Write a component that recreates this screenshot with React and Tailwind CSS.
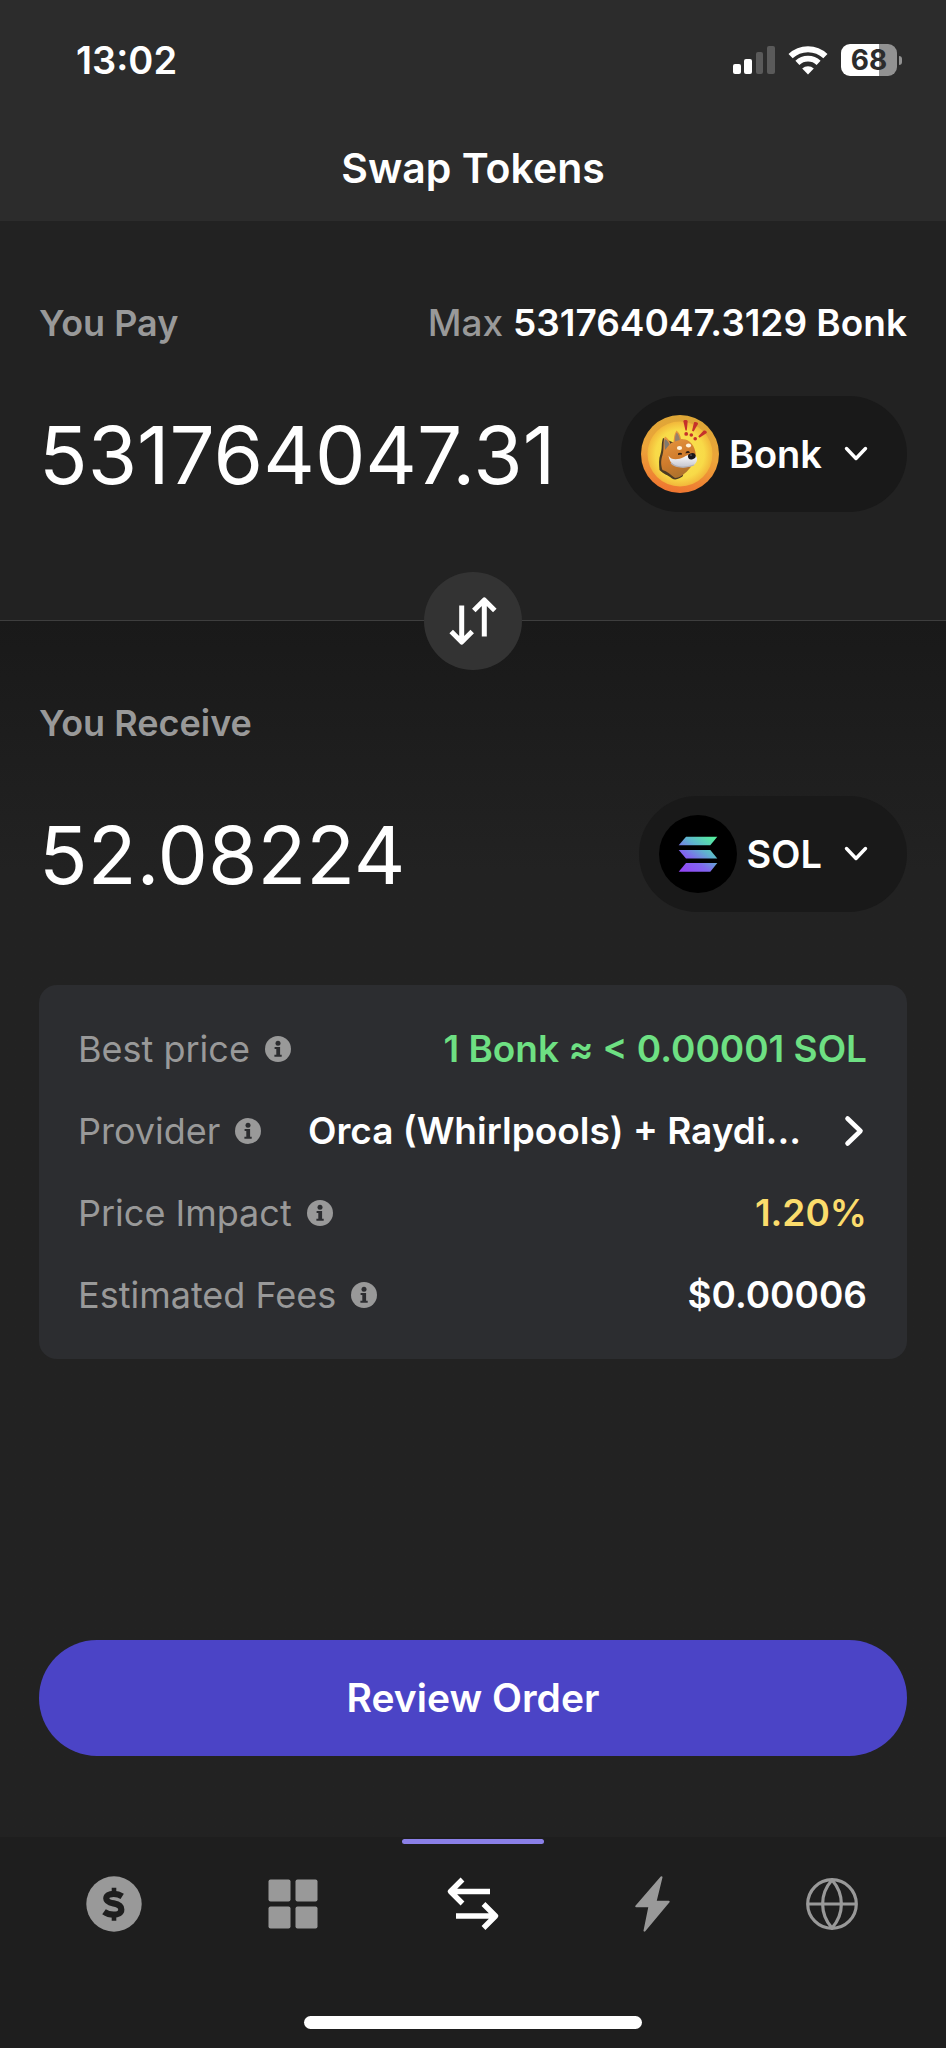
import React, { useState } from "react";

function SignalIcon() {
  return (
    <svg width="42" height="30" viewBox="0 0 42 30" aria-hidden="true">
      <rect x="0" y="19" width="8" height="10" rx="2" fill="#fff" />
      <rect x="11" y="14" width="8" height="15" rx="2" fill="#fff" />
      <rect x="23" y="7" width="7" height="22" rx="2" fill="#5a5a5a" />
      <rect x="34" y="1" width="8" height="28" rx="2" fill="#5a5a5a" />
    </svg>
  );
}

function WifiIcon() {
  return (
    <svg width="40" height="30" viewBox="0 0 40 30" fill="none" aria-hidden="true">
      <path d="M2.6 11.2A25.2 25.2 0 0 1 37.4 11.2" stroke="#fff" strokeWidth="6" />
      <path d="M9.4 17.8A15.4 15.4 0 0 1 30.6 17.8" stroke="#fff" strokeWidth="5.8" />
      <path d="M20 29.6L14.2 23.4A8.6 8.6 0 0 1 25.8 23.4Z" fill="#fff" />
    </svg>
  );
}

function Battery() {
  return (
    <div className="flex items-center gap-[2px]" aria-label="Battery 68%">
      <div className="flex h-8 w-14 items-center justify-center rounded-[9px] bg-linear-to-r from-white from-68% to-[#929292] to-68% text-[28px] leading-8 font-bold text-[#2c2c2c]">
        68
      </div>
      <div className="h-[9px] w-[3px] rounded-r-full bg-[#929292]" />
    </div>
  );
}

function BonkLogo() {
  return (
    <svg width="78" height="78" viewBox="0 0 78 78" className="shrink-0" aria-hidden="true">
      <defs>
        <linearGradient id="rim" x1="0.6" y1="0" x2="0.4" y2="1">
          <stop offset="0" stopColor="#dca636" />
          <stop offset="0.5" stopColor="#eda53a" />
          <stop offset="1" stopColor="#ef7430" />
        </linearGradient>
        <radialGradient id="disc">
          <stop offset="0" stopColor="#fbe552" />
          <stop offset="0.75" stopColor="#f8da48" />
          <stop offset="1" stopColor="#f2b73a" />
        </radialGradient>
        <linearGradient id="fur" x1="0.3" y1="0" x2="0.6" y2="1">
          <stop offset="0" stopColor="#ea9a42" />
          <stop offset="0.6" stopColor="#cf7b2c" />
          <stop offset="1" stopColor="#a8702c" />
        </linearGradient>
        <linearGradient id="muzzle" x1="0" y1="0" x2="0" y2="1">
          <stop offset="0" stopColor="#ffffff" />
          <stop offset="1" stopColor="#c4c4cc" />
        </linearGradient>
      </defs>
      <circle cx="39" cy="39" r="39" fill="url(#rim)" />
      <circle cx="39" cy="39" r="32.5" fill="url(#disc)" />
      <path d="M22 23C20 29 21.500 33 19.500 39C17.500 44 18 49 18.500 55C22 59 27 60 31 63.500C35 66 39 63 42 61L38 30Z" fill="#4b3a22" />
      <path d="M24 21.500C21.500 27 23.500 33 21.500 40C19.500 46 20 51 21.500 55C26 56 30 60 34 63C39 63 45 58 49 53L54.500 45C56 38 53 28 46 25C44 24 41 24 40 24C39.500 20 37.500 17 35.500 15.500C33 19 33 23 32.500 27C31 27.500 30 28 29.500 29C28 25 26.500 23 24 21.500Z" fill="url(#fur)" />
      <path d="M24 24C22.500 28 24 31 24 35L28.500 29.500C27.500 27 26 25 24 24Z" fill="#80796e" />
      <path d="M35.700 17.500C34 20 34 23 34 26.500L38.800 25C38.500 22 37.500 19.500 35.700 17.500Z" fill="#96816c" />
      <path d="M27.500 40.500C30 45.500 37 45 43 42C47 39.500 52 38 55.500 42C57.500 46 54 51.500 47 52C38 53.500 29 51.500 27.500 40.500Z" fill="url(#muzzle)" />
      <path d="M30 48C35 53 45 53 53 50" fill="none" stroke="#b4b1b6" strokeWidth="1.200" />
      <ellipse cx="38.500" cy="33" rx="2.600" ry="2" fill="#fff3dc" />
      <ellipse cx="47.500" cy="30.500" rx="2.600" ry="2" fill="#fff3dc" />
      <path d="M37 39.300C38 38 40 38 40.800 39Z" fill="#2a1a12" stroke="#2a1a12" />
      <path d="M44.800 37.800C45.800 36.300 47.800 36.300 48.500 37.300Z" fill="#2a1a12" stroke="#2a1a12" />
      <ellipse cx="50.800" cy="41.300" rx="3.900" ry="3.100" fill="#18161b" transform="rotate(-15 50.800 41.300)" />
      <ellipse cx="50" cy="40" rx="1.200" ry="0.600" fill="#77747c" />
      <g fill="#c5312b">
        <path d="M42.300 6C42.500 4.500 46.500 4.500 46.700 6L45.800 15.500H44.500Z" />
        <circle cx="45.200" cy="18.900" r="1.900" />
        <path d="M53 7.500C54 6.300 57.500 7.500 57 9L52.600 16.500L51 15.800Z" />
        <circle cx="50.300" cy="20" r="1.800" />
        <path d="M62.500 15.800C64 14.600 66.500 16.500 65.700 18L58.500 22.700L57.300 21.300Z" />
        <circle cx="54.200" cy="23.800" r="1.800" />
      </g>
    </svg>
  );
}

function SolanaLogo() {
  return (
    <svg width="78" height="78" viewBox="0 0 78 78" className="shrink-0" aria-hidden="true">
      <defs>
        <linearGradient id="sol" gradientUnits="userSpaceOnUse" x1="26" y1="58" x2="52" y2="22">
          <stop offset="0" stopColor="#9345f5" />
          <stop offset="0.35" stopColor="#8067ef" />
          <stop offset="0.65" stopColor="#5fb3cf" />
          <stop offset="1" stopColor="#55eba0" />
        </linearGradient>
      </defs>
      <circle cx="39" cy="39" r="39" fill="#000" />
      <g fill="url(#sol)">
        <path d="M27 21.700H58.300L51.300 30.300H19.700Z" />
        <path d="M19.700 35H51.300L58.300 43.600H27Z" />
        <path d="M27 48H58.300L51.300 56.700H19.700Z" />
      </g>
    </svg>
  );
}

function ChevronDown() {
  return (
    <svg width="24" height="16" viewBox="0 0 24 16" fill="none" className="shrink-0" aria-hidden="true">
      <path d="M2.500 2.500L12 12.500L21.500 2.500" stroke="#fff" strokeWidth="3.400" strokeLinecap="round" strokeLinejoin="round" />
    </svg>
  );
}

function InfoIcon() {
  return (
    <svg width="26" height="26" viewBox="0 0 26 26" aria-hidden="true">
      <circle cx="13" cy="13" r="13" fill="#999" />
      <circle cx="13" cy="7.300" r="2.500" fill="#2c2d30" />
      <path d="M9.600 11H15.100V18.800H16.700V20.800H9.400V18.800H11.300V12.900H9.600Z" fill="#2c2d30" />
    </svg>
  );
}

function TokenButton({ logo, symbol }) {
  return (
    <button
      type="button"
      className="flex h-[116px] shrink-0 items-center rounded-full bg-[#191919] pr-[39px] pl-5 text-[38px] leading-[48px] font-semibold text-white"
    >
      {logo}
      <span className="ml-[10px]">{symbol}</span>
      <span className="ml-[22px]">
        <ChevronDown />
      </span>
    </button>
  );
}

function AmountRow({ id, value, onChange, readOnly, logo, symbol }) {
  return (
    <div className="mt-[49px] flex items-center gap-4">
      <input
        id={id}
        value={value}
        onChange={onChange}
        readOnly={readOnly}
        inputMode="decimal"
        className="h-[116px] min-w-0 flex-1 bg-transparent text-[80px] text-white outline-none"
      />
      <TokenButton logo={logo} symbol={symbol} />
    </div>
  );
}

function DetailRow({ label, children }) {
  return (
    <div className="flex items-center justify-between">
      <dt className="flex items-center gap-[15px] text-[#999]">
        {label}
        <button type="button" aria-label={`About ${label}`}>
          <InfoIcon />
        </button>
      </dt>
      <dd className="text-[37px] font-semibold whitespace-nowrap text-white">{children}</dd>
    </div>
  );
}

const tabs = [
  {
    name: "Wallet",
    icon: (
      <svg width="56" height="56" viewBox="0 0 56 56" fill="none">
        <circle cx="28" cy="28" r="27.700" fill="#999" />
        <g stroke="#1e1e1e">
          <path d="M36.200 20.300C33.500 18.600 30.500 17.900 27.700 17.900C23 17.900 20.300 19.700 20.300 22.500C20.300 25.700 23.500 26.600 27.500 27.400C32 28.300 35.300 29.800 35.300 33.400C35.300 36.900 32 38.700 27.500 38.700C24 38.700 20.700 37.600 18 35.700" strokeWidth="6.200" />
          <path d="M28 11.700V17M28 39V44.700" strokeWidth="4.600" />
        </g>
      </svg>
    ),
  },
  {
    name: "Collectibles",
    icon: (
      <svg width="50" height="50" viewBox="0 0 50 50" fill="#999">
        <rect x="0.500" y="0.500" width="22" height="22" rx="2" />
        <rect x="27.500" y="0.500" width="22" height="22" rx="2" />
        <rect x="0.500" y="27.500" width="22" height="22" rx="2" />
        <rect x="27.500" y="27.500" width="22" height="22" rx="2" />
      </svg>
    ),
  },
  {
    name: "Swap",
    active: true,
    icon: (
      <svg width="54" height="54" viewBox="0 0 54 54" fill="none" stroke="#fff" strokeWidth="5.400">
        <path d="M44 14.500H5M16.500 2.500L4.500 14.500L16.500 26.500" strokeLinejoin="round" />
        <path d="M10 39H49M37.500 27L49.500 39L37.500 51" strokeLinejoin="round" />
      </svg>
    ),
  },
  {
    name: "Activity",
    icon: (
      <svg width="36" height="56" viewBox="0 0 36 56" fill="#999" stroke="#999" strokeLinejoin="round" strokeWidth="2">
        <path d="M26.500 1.200L20.500 25.700H33.700L9.500 54.600L14.500 30.300H1.200Z" />
      </svg>
    ),
  },
  {
    name: "Browser",
    icon: (
      <svg width="52" height="52" viewBox="0 0 52 52" fill="none" stroke="#999" strokeWidth="3.200">
        <circle cx="26" cy="26" r="24.300" />
        <path d="M2 26H50M26 2C13.500 16 13.500 36 26 50C38.500 36 38.500 16 26 2Z" strokeLinejoin="round" />
      </svg>
    ),
  },
];

export default function App() {
  const [pay, setPay] = useState("531764047.31");

  return (
    <div className="flex min-h-screen flex-col bg-[#222] font-[Inter,sans-serif] text-[36px] leading-[48px]">
      <header className="bg-[#2c2c2c] pt-9 pb-[29px] text-white">
        <div className="flex items-center justify-between pr-11 pl-[76px]">
          <time className="text-[38px] leading-[48px] font-semibold">13:02</time>
          <div className="flex items-center gap-[13px]">
            <SignalIcon />
            <WifiIcon />
            <Battery />
          </div>
        </div>
        <h1 className="mt-[60px] text-center text-[41px] leading-[48px] font-semibold">Swap Tokens</h1>
      </header>

      <main className="flex flex-1 flex-col">
        <section className="border-b border-[#3e3e3e] px-[39px] pt-[78px] pb-[108px]">
          <div className="flex items-center justify-between text-[#999]">
            <label htmlFor="pay" className="font-semibold">You Pay</label>
            <button type="button" className="text-[37px] leading-[48px] font-medium">
              Max <span className="font-semibold text-white">531764047.3129 Bonk</span>
            </button>
          </div>
          <AmountRow
            id="pay"
            value={pay}
            onChange={(e) => setPay(e.target.value)}
            logo={<BonkLogo />}
            symbol="Bonk"
          />
        </section>

        <section className="relative flex flex-1 flex-col bg-linear-to-b from-[#191919] to-[#222] to-[250px] px-[39px] pt-[78px]">
          <button
            type="button"
            aria-label="Switch tokens"
            className="absolute top-0 left-1/2 flex size-[98px] -translate-x-1/2 -translate-y-1/2 items-center justify-center rounded-full bg-[#333]"
          >
            <svg width="50" height="50" viewBox="0 0 50 50" fill="none" stroke="#fff" strokeWidth="5" strokeLinejoin="round">
              <path d="M13.700 9.500V46M3.200 35.500L13.700 46L24.200 35.500" />
              <path d="M36.300 40.500V4M25.800 14.500L36.300 4L46.800 14.500" />
            </svg>
          </button>

          <label htmlFor="receive" className="font-semibold text-[#999]">You Receive</label>
          <AmountRow id="receive" value="52.08224" readOnly logo={<SolanaLogo />} symbol="SOL" />

          <dl className="mt-[73px] flex flex-col gap-[34px] rounded-[18px] bg-[#2c2d30] py-10 pr-10 pl-[39px]">
            <DetailRow label="Best price">
              <span className="text-[#6ee083]">1 Bonk ≈ &lt; 0.00001 SOL</span>
            </DetailRow>
            <DetailRow label="Provider">
              <button type="button" className="flex items-center gap-[42px]">
                Orca (Whirlpools) + Raydi...
                <svg width="24" height="34" viewBox="0 0 24 34" fill="none" aria-hidden="true">
                  <path d="M4.500 4.500L17.500 17L4.500 29.500" stroke="#fff" strokeWidth="4.600" strokeLinecap="round" strokeLinejoin="round" />
                </svg>
              </button>
            </DetailRow>
            <DetailRow label="Price Impact">
              <span className="text-[#fbdc6c]">1.20%</span>
            </DetailRow>
            <DetailRow label="Estimated Fees">$0.00006</DetailRow>
          </dl>

          <button
            type="button"
            className="mt-auto mb-[81px] h-[116px] shrink-0 rounded-full bg-[#4b44c6] text-[39px] font-semibold text-white"
          >
            Review Order
          </button>
        </section>
      </main>

      <footer className="bg-[#1e1e1e] pb-[19px]">
        <nav className="grid grid-cols-5 px-6">
          {tabs.map((tab) => (
            <a
              key={tab.name}
              href={`#${tab.name.toLowerCase()}`}
              aria-label={tab.name}
              aria-current={tab.active ? "page" : undefined}
              className="relative flex h-[133px] items-center justify-center"
            >
              {tab.active && (
                <span className="absolute inset-x-[19px] top-[2px] h-[5px] rounded-full bg-[#8b80e8]" />
              )}
              {tab.icon}
            </a>
          ))}
        </nav>
        <div className="mx-auto mt-[46px] h-[13px] w-[338px] rounded-full bg-white" />
      </footer>
    </div>
  );
}
